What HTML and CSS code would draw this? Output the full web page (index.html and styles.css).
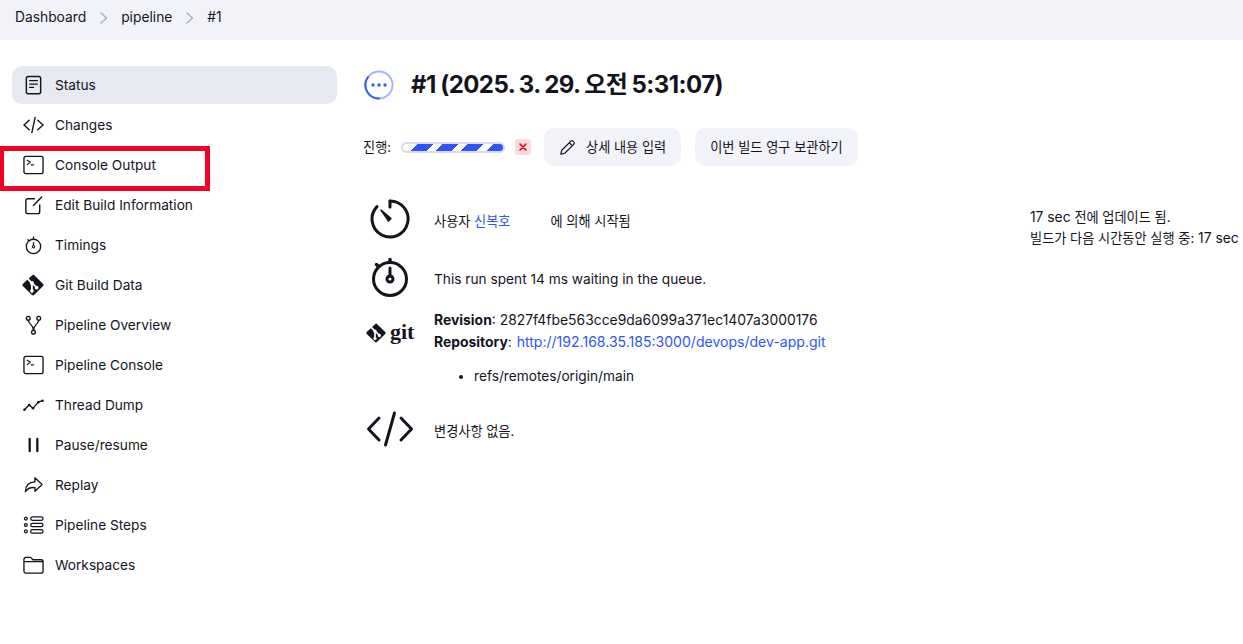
FILE: index.html
```html
<!DOCTYPE html>
<html lang="ko">
<head>
<meta charset="utf-8">
<title>#1 - pipeline</title>
<link rel="stylesheet" href="styles.css">
</head>
<body>
<svg class="defs" width="0" height="0" aria-hidden="true">
  <symbol id="i-term" viewBox="0 0 22 20"><rect x="1" y="1" width="20" height="18" rx="2" fill="none" stroke="currentColor" stroke-width="1.4"/><path d="M4.5 5l3.2 2.2-3.2 2.2M8.5 9.8h2.5" fill="none" stroke="currentColor" stroke-width="1.2" stroke-linecap="round" stroke-linejoin="round"/></symbol>
  <symbol id="i-gitmark" viewBox="0 0 24 24"><path fill="currentColor" fill-rule="evenodd" d="M12 .6c.4 0 .8.2 1.1.5l10 9.8c.6.6.6 1.6 0 2.2l-10 9.8c-.6.6-1.6.6-2.2 0l-10-9.8c-.6-.6-.6-1.6 0-2.2L5.700 6.200l3 3a2 2 0 0 0 1.100 2.500v5a2 2 0 1 0 2 0v-4.700l2.300 2.300a2 2 0 1 0 1.400-1.300l-2.700-2.800a2 2 0 0 0-2.500-2.400l-3-3 3.600-3.300c.3-.3.700-.5 1.100-.5z"/></symbol>
</svg>

<header class="topbar">
  <span>Dashboard</span>
  <svg class="chev" viewBox="0 0 10 12"><path d="M2 1L7.500 6 2 11" fill="none" stroke="currentColor" stroke-width="1.500" stroke-linecap="round" stroke-linejoin="round"/></svg>
  <span>pipeline</span>
  <svg class="chev" viewBox="0 0 10 12"><path d="M2 1L7.500 6 2 11" fill="none" stroke="currentColor" stroke-width="1.500" stroke-linecap="round" stroke-linejoin="round"/></svg>
  <span>#1</span>
</header>

<div class="layout">
  <nav class="side">
    <a class="item active"><svg class="ico" viewBox="0 0 22 20"><rect x="3.500" y="1" width="15" height="18.200" rx="2" fill="none" stroke="currentColor" stroke-width="1.500"/><path d="M7 5.500h8M7 9h8M7 12.500h4" stroke="currentColor" stroke-width="1.400" stroke-linecap="round"/></svg>Status</a>
    <a class="item"><svg class="ico" viewBox="0 0 22 20"><path d="M6.500 5L1 10l5.500 5M15.500 5l5.500 5-5.500 5M12.700 2l-3.400 16" fill="none" stroke="currentColor" stroke-width="1.500" stroke-linecap="round" stroke-linejoin="round"/></svg>Changes</a>
    <a class="item"><svg class="ico"><use href="#i-term"/></svg>Console Output</a>
    <a class="item"><svg class="ico" viewBox="0 0 22 20"><path d="M12 3.500H5a2 2 0 0 0-2 2v11.500a2 2 0 0 0 2 2h10.500a2 2 0 0 0 2-2V10M11 10.500L19.500 1.500" fill="none" stroke="currentColor" stroke-width="1.500" stroke-linecap="round" stroke-linejoin="round"/></svg>Edit Build Information</a>
    <a class="item"><svg class="ico" viewBox="0 0 22 20"><circle cx="11" cy="11.500" r="7.500" fill="none" stroke="currentColor" stroke-width="1.400"/><path d="M11 1.500v2M5 4.500l1 1" stroke="currentColor" stroke-width="1.400" stroke-linecap="round"/><path d="M11 7v3.500" stroke="currentColor" stroke-width="1.300"/><circle cx="11" cy="11.800" r="1.300" fill="none" stroke="currentColor" stroke-width="1.100"/></svg>Timings</a>
    <a class="item"><svg class="ico ico-git"><use href="#i-gitmark"/></svg>Git Build Data</a>
    <a class="item"><svg class="ico" viewBox="0 0 22 20"><circle cx="5.500" cy="3" r="2" fill="none" stroke="currentColor" stroke-width="1.400"/><circle cx="16.500" cy="3" r="2" fill="none" stroke="currentColor" stroke-width="1.400"/><circle cx="11" cy="17.500" r="2" fill="none" stroke="currentColor" stroke-width="1.400"/><path d="M5.500 5c0 4 5.500 4.500 5.500 10.500M16.500 5c0 4-5.500 4.500-5.500 10.500" fill="none" stroke="currentColor" stroke-width="1.400"/></svg>Pipeline Overview</a>
    <a class="item"><svg class="ico"><use href="#i-term"/></svg>Pipeline Console</a>
    <a class="item"><svg class="ico" viewBox="0 0 22 20"><path d="M1.500 15l5-5 4 3.500L16 7l4.500-1.500" fill="none" stroke="currentColor" stroke-width="1.400"/><g fill="currentColor"><circle cx="1.500" cy="15" r="1.300"/><circle cx="6.500" cy="10" r="1.300"/><circle cx="10.500" cy="13.500" r="1.300"/><circle cx="16" cy="7" r="1.300"/><circle cx="20.500" cy="5.500" r="1.300"/></g></svg>Thread Dump</a>
    <a class="item"><svg class="ico" viewBox="0 0 22 20"><path d="M7 3.500v13M15 3.500v13" stroke="currentColor" stroke-width="2.400" stroke-linecap="round"/></svg>Pause/resume</a>
    <a class="item"><svg class="ico" viewBox="0 0 22 20"><path d="M12.500 2.500l7.500 7-7.500 7v-3.800c-4.500-.5-7.800 1-10 4.300 0-6 3-9.800 10-10.200z" fill="none" stroke="currentColor" stroke-width="1.400" stroke-linejoin="round"/></svg>Replay</a>
    <a class="item"><svg class="ico" viewBox="0 0 22 20"><g fill="none" stroke="currentColor" stroke-width="1.300"><rect x="8" y="1.500" width="13" height="3.600" rx="1.800"/><rect x="8" y="8.200" width="13" height="3.600" rx="1.800"/><rect x="8" y="14.900" width="13" height="3.600" rx="1.800"/><circle cx="3" cy="3.300" r="1.500"/><circle cx="3" cy="10" r="1.500"/><circle cx="3" cy="16.700" r="1.500"/></g></svg>Pipeline Steps</a>
    <a class="item"><svg class="ico" viewBox="0 0 22 20"><path d="M1 4a2 2 0 0 1 2-2h5l2.500 2.500H19a2 2 0 0 1 2 2V16.500a2 2 0 0 1-2 2H3a2 2 0 0 1-2-2zM1 6.500h20" fill="none" stroke="currentColor" stroke-width="1.400" stroke-linejoin="round"/></svg>Workspaces</a>
  </nav>

  <main class="main">
    <div class="title-row">
      <svg class="status" viewBox="0 0 30 30"><circle cx="15" cy="15" r="13.500" fill="none" stroke="#a7b5fb" stroke-width="2"/><path d="M15 28.500A13.500 13.500 0 0 1 4 7" fill="none" stroke="#3a5bf5" stroke-width="2" stroke-linecap="round"/><g fill="#3a5bf5"><circle cx="9" cy="15" r="1.700"/><circle cx="15" cy="15" r="1.700"/><circle cx="21" cy="15" r="1.700"/></g></svg>
      <h1 class="title">#1 (2025. 3. 29. 오전 5:31:07)</h1>
    </div>

    <div class="actions">
      <span class="progress-label">진행:</span>
      <span class="bar"></span>
      <span class="stop"><svg viewBox="0 0 10 10"><path d="M2 2l6 6M8 2l-6 6" stroke="#e6001f" stroke-width="1.600" stroke-linecap="round"/></svg></span>
      <a class="btn"><svg class="pencil" viewBox="0 0 18 18"><path d="M2 16l.9-4.100L12.600 2.200a1.500 1.500 0 0 1 2.100 0l1.100 1.100a1.500 1.500 0 0 1 0 2.100L6.100 15.100zM11 4l3 3" fill="none" stroke="currentColor" stroke-width="1.300" stroke-linejoin="round"/></svg>상세 내용 입력</a>
      <a class="btn">이번 빌드 영구 보관하기</a>
    </div>

    <div class="content">
      <section class="rows">
        <div class="row">
          <svg class="big" viewBox="0 0 42 42"><path d="M21 3a18 18 0 1 1-13 5.600" fill="none" stroke="currentColor" stroke-width="3" stroke-linecap="round"/><path d="M21 3v6" stroke="currentColor" stroke-width="3" stroke-linecap="round"/><path d="M12 12l10 8.500-2.500 2.500z" fill="currentColor" stroke="currentColor" stroke-width="1.500" stroke-linejoin="round"/></svg>
          <p class="text ko">사용자 <a class="link">신복호</a><span class="gap"></span>에 의해 시작됨</p>
        </div>
        <div class="row">
          <svg class="big" viewBox="0 0 42 42"><circle cx="21" cy="23" r="16.500" fill="none" stroke="currentColor" stroke-width="3"/><path d="M21 3.500v2M7.500 8.500l2 2" stroke="currentColor" stroke-width="3.500" stroke-linecap="round"/><path d="M21 12v8" stroke="currentColor" stroke-width="3" stroke-linecap="round"/><circle cx="21" cy="23" r="3" fill="none" stroke="currentColor" stroke-width="3"/></svg>
          <p class="text">This run spent 14 ms waiting in the queue.</p>
        </div>
        <div class="row row-git">
          <div class="gitlogo"><svg class="gitmark"><use href="#i-gitmark"/></svg><span class="gitword">git</span></div>
          <div>
            <p class="scm"><b class="label">Revision</b>: 2827f4fbe563cce9da6099a371ec1407a3000176</p>
            <p class="scm"><b class="label">Repository</b>: <a class="link url">http://192.168.35.185:3000/devops/dev-app.git</a></p>
            <ul class="refs"><li>refs/remotes/origin/main</li></ul>
          </div>
        </div>
        <div class="row row-changes">
          <svg class="big wide" viewBox="0 0 48 36"><path d="M13 7L2.500 18 13 29M35 7l10.500 11L35 29M28.500 2l-9 32" fill="none" stroke="currentColor" stroke-width="3" stroke-linecap="round" stroke-linejoin="round"/></svg>
          <p class="text-changes ko">변경사항 없음.</p>
        </div>
      </section>
      <aside class="meta"><span class="latin">17 sec</span> <span class="ko">전에 업데이드 됨.</span><br><span class="ko">빌드가 다음 시간동안 실행 중:</span> <span class="latin">17 sec</span></aside>
    </div>
  </main>
</div>

<div class="highlight"></div>
</body>
</html>
```
FILE: styles.css
```css
* { box-sizing: border-box; }
html, body { margin: 0; height: 100%; overflow: hidden; }
body {
  position: relative;
  background: #fff;
  color: #14141f;
  font: 13.7px/21px Inter, "Noto Sans CJK KR", sans-serif;
}
.defs { position: absolute; }
p { margin: 0; }
.ko { font-size: 13.2px; }
.latin { font-size: 13.8px; }
.topbar {
  display: flex;
  align-items: center;
  height: 40px;
  padding: 0 0 5px 15px;
  background: #f2f3f8;
  font-size: 13.8px;
}
.chev { width: 10px; height: 12px; margin: 0 12.500px; color: #a5b0cb; }
.layout { display: flex; }
.side {
  display: flex;
  flex-direction: column;
  gap: 2px;
  width: 325px;
  margin: 26px 0 0 12px;
}
.item {
  display: flex;
  align-items: center;
  gap: 11px;
  height: 38px;
  padding: 0 11px;
}
.item.active { background: #e6e8f2; border-radius: 10px; }
.ico { width: 21px; height: 20px; flex: none; margin-bottom: 1px; }
.ico-git { width: 22px; height: 22px; margin: 0 0 1px -1px; }
.main { flex: 1; margin: 26px 0 0 26px; min-width: 0; }
.title-row { display: flex; align-items: center; gap: 17px; height: 38px; padding-bottom: 1px; }
.status { width: 30px; height: 30px; flex: none; margin-left: 1px; }
.title { margin: 0; font-size: 24px; line-height: 36px; font-weight: 700; letter-spacing: -0.55px; word-spacing: -0.8px; white-space: nowrap; }
.actions { display: flex; align-items: center; margin-top: 24px; height: 38px; font-size: 13.2px; }
.progress-label { width: 38px; }
.bar {
  width: 104px;
  height: 11px;
  border: 2px solid #d8dcee;
  border-radius: 6px;
  background:
    linear-gradient(135deg, #fff 0 10.600px, transparent 10.600px),
    repeating-linear-gradient(135deg, #2f55f5 0 4.200px, #fff 4.200px 10.600px, #2f55f5 10.600px 17.680px);
}
.stop {
  display: flex;
  align-items: center;
  justify-content: center;
  width: 16px;
  height: 16px;
  margin: 0 13px 0 10px;
  background: #fbdada;
  border-radius: 3px;
}
.stop svg { width: 10px; height: 10px; }
.btn {
  display: flex;
  align-items: center;
  gap: 10px;
  height: 38px;
  padding: 0 15px;
  margin-right: 14px;
  background: #f2f3f8;
  border-radius: 10px;
  white-space: nowrap;
}
.pencil { width: 17px; height: 17px; }
.content { display: flex; justify-content: space-between; margin-top: 33px; }
.rows { display: flex; flex-direction: column; flex: none; width: 660px; }
.row {
  display: grid;
  grid-template-columns: 54px 1fr;
  column-gap: 17px;
  align-items: start;
  justify-items: start;
  margin-bottom: 17px;
}
.big { width: 42px; height: 42px; justify-self: center; margin-top: -1px; }
.big.wide { width: 48px; height: 36px; margin-top: -2px; }
.text { margin-top: 12px; }
.row-git { margin-top: -5px; margin-bottom: 26px; }
.row-changes { margin-bottom: 0; }
.text-changes { margin-top: 8px; }
.link { color: #2f55f5; }
.scm { font-size: 13.900px; }
.url { font-size: 14.050px; margin-left: 1px; }
.label { font-weight: 700; }
.gap { display: inline-block; width: 40px; }
.gitlogo { display: flex; align-items: center; gap: 4px; margin: 13px 0 0 3px; height: 20px; }
.gitmark { width: 20px; height: 20px; flex: none; }
.gitword { font: 700 22px/20px "Liberation Serif", serif; margin-top: -3px; }
.refs { margin: 13px 0 0; padding-left: 40px; }
.meta { flex: none; width: 213px; white-space: nowrap; margin-top: 8px; }
.highlight {
  position: absolute;
  left: 0;
  top: 146px;
  width: 210px;
  height: 45px;
  border: 5px solid #f30026;
  border-left-width: 4px;
  pointer-events: none;
}
```
